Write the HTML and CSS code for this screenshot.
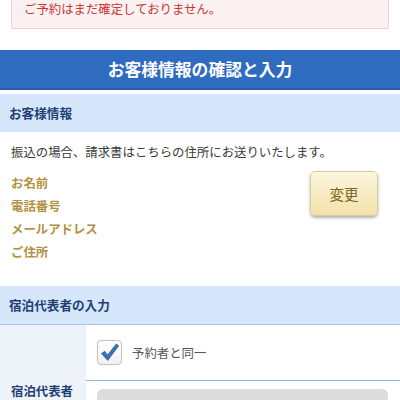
FILE: index.html
```html
<!DOCTYPE html>
<html lang="ja">
<head>
<meta charset="utf-8">
<title>お客様情報の確認と入力</title>
<link rel="stylesheet" href="styles.css">
</head>
<body>
  <div class="alert">ご予約はまだ確定しておりません。</div>

  <h1 class="page-title">お客様情報の確認と入力</h1>

  <section class="customer">
    <h2 class="section-head">お客様情報</h2>
    <p class="note">振込の場合、請求書はこちらの住所にお送りいたします。</p>
    <div class="info">
      <ul class="fields">
        <li>お名前</li>
        <li>電話番号</li>
        <li>メールアドレス</li>
        <li>ご住所</li>
      </ul>
      <button class="btn-change" type="button">変更</button>
    </div>
  </section>

  <section class="guest">
    <h2 class="section-head section-head--line">宿泊代表者の入力</h2>
    <div class="rep">
      <div class="rep-label">宿泊代表者</div>
      <div class="rep-body">
        <label class="same">
          <span class="checkbox">
            <svg viewBox="0 0 24 24" width="24" height="24" aria-hidden="true">
              <path d="M4 13.4 L7.8 10.8 L10.5 14.6 L19.2 3.4 L22.2 5.8 L10.8 21 Z" fill="#3d6fb3"/>
            </svg>
          </span>
          <span class="same-text">予約者と同一</span>
        </label>
        <div class="field-input"></div>
      </div>
    </div>
  </section>
</body>
</html>
```
FILE: styles.css
```css
html, body {
  margin: 0;
  padding: 0;
  background: #fff;
}

body {
  width: 400px;
  font-family: "Noto Sans CJK JP", "Noto Sans", sans-serif;
  font-size: 12.4px;
  color: #3a3a3a;
  overflow: hidden;
}

/* reservation status notice */
.alert {
  margin: 0 11px 21px;
  padding: 0 12px 10px;
  line-height: 18px;
  background: #fcf1f1;
  border: 1px solid #f6d0d0;
  border-top: none;
  color: #c83535;
  font-size: 12.4px;
}

.page-title {
  margin: 0 0 4px;
  height: 38px;
  line-height: 38px;
  background: #2f6bbf;
  border-bottom: 2px solid #2a5ea8;
  color: #fff;
  font-size: 16.8px;
  font-weight: bold;
  text-align: center;
}

.section-head {
  margin: 0;
  height: 38px;
  line-height: 38px;
  padding-left: 9px;
  background: #d6e6fb;
  color: #1f3f73;
  font-size: 12.6px;
  font-weight: bold;
}

.section-head--line {
  border-bottom: 1px solid #a6c3e7;
}

.note {
  margin: 0;
  padding: 11px 11px 0;
  line-height: 18px;
}

.info {
  display: flex;
  justify-content: space-between;
  align-items: flex-start;
  padding: 11px 22px 22px 11px;
}

.fields {
  list-style: none;
  margin: 0;
  padding: 0;
}

.fields li {
  line-height: 23px;
  color: #b3923f;
  font-weight: bold;
}

.btn-change {
  margin-top: -1px;
  width: 68px;
  height: 45px;
  padding: 0;
  border: 1px solid #d9cc9c;
  border-radius: 5px;
  background: linear-gradient(#fcf6df, #f2e2aa);
  box-shadow: 0 2px 3px rgba(0, 0, 0, 0.3);
  color: #7a6523;
  font-family: inherit;
  font-size: 14.5px;
}

/* representative guest */
.rep {
  display: grid;
  grid-template-columns: 86px 1fr;
}

.rep-label {
  background: #eef3fa;
  padding: 57px 0 0 11px;
  line-height: 18px;
  color: #1f3f73;
  font-weight: bold;
  height: 100px;
}

.same {
  display: flex;
  align-items: center;
  gap: 10px;
  height: 55px;
  padding-left: 11px;
  border-bottom: 1px solid #8eb2dc;
}

.checkbox {
  display: flex;
  width: 23px;
  height: 23px;
  border: 1px solid #c2c2c2;
  border-radius: 4px;
  background: linear-gradient(#fff, #f1f1f1);
}

.checkbox svg {
  margin: -1px 0 0 -1px;
}

.same-text {
  color: #555;
}

.field-input {
  margin: 8px 12px 0 11px;
  height: 40px;
  border-radius: 6px;
  background: #dcdcdc;
}
```
